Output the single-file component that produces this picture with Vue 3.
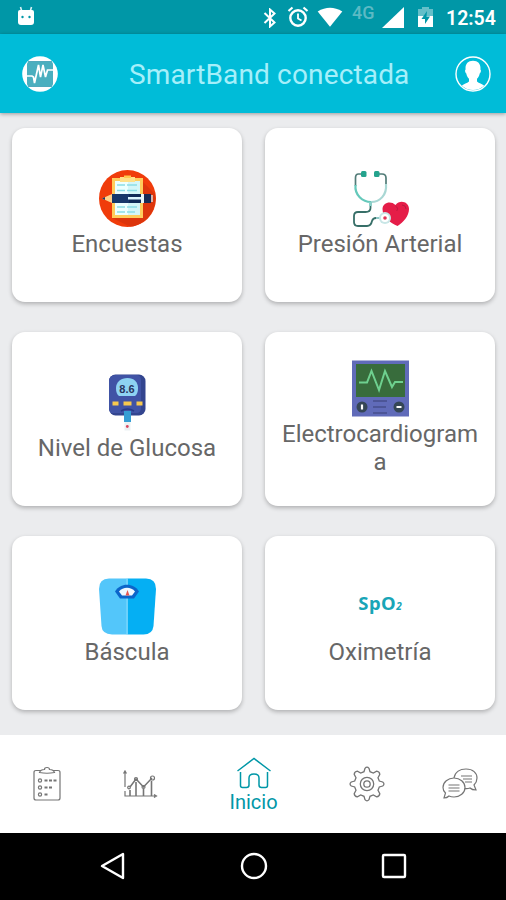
<script setup>
const cards = [
  { id: 'survey', label: 'Encuestas' },
  { id: 'pressure', label: 'Presión Arterial' },
  { id: 'glucose', label: 'Nivel de Glucosa' },
  { id: 'ecg', label: 'Electrocardiograma' },
  { id: 'scale', label: 'Báscula' },
  { id: 'spo2', label: 'Oximetría' },
]
</script>

<template>
  <div class="screen">
    <div class="status">
      <svg class="bot" width="18" height="20" viewBox="0 0 18 20">
        <path d="M5 6 3.500 1M13 6l1.500-5" stroke="#d9f1f4" stroke-width="1.600" />
        <path d="M1 6q0-2 2-2h12q2 0 2 2v10q0 3-3 3H4q-3 0-3-3Z" fill="#fff" />
        <circle cx="5.500" cy="11" r="1.200" fill="#0097a7" /><circle cx="12.500" cy="11" r="1.200" fill="#0097a7" />
      </svg>
      <div class="signals">
        <svg width="14" height="20" viewBox="0 0 14 20" fill="none" stroke="#fff" stroke-width="2">
          <path d="m1.500 5 10 9.500L7 18.500V1.500L11.500 5.500l-10 9.500" />
        </svg>
        <svg class="alarm" width="22" height="22" viewBox="0 0 22 22" fill="none" stroke="#fff">
          <circle cx="11" cy="12" r="7.700" stroke-width="2.400" />
          <path d="M11 7.500V12.500l3.500 2" stroke-width="1.800" />
          <path d="m1.500 5 4-3.500M20.500 5l-4-3.500" stroke-width="2.200" />
        </svg>
        <svg class="wifi" width="26" height="20" viewBox="0 0 26 20"><path d="M.7 4.500Q13-3 25.300 4.500L13 19.700Z" fill="#fff" /></svg>
        <span class="net">4G</span>
        <svg class="cell" width="22" height="21" viewBox="0 0 22 21"><path d="M22 0v21H0Z" fill="#fff" /></svg>
        <svg class="battery" width="15" height="20" viewBox="0 0 15 20">
          <path d="M0 2h4V0h7v2h4v8H0Z" fill="#64bfc9" /><path d="M0 9h15v11H0Z" fill="#fff" />
          <path d="M9 4 3.500 12H7v5l5-7.500H8.500Z" fill="#0097a7" />
        </svg>
        <span class="clock">12:54</span>
      </div>
    </div>

    <header class="header">
      <svg width="36" height="36" viewBox="0 0 36 36">
        <circle cx="18" cy="18" r="17.800" fill="#fff" />
        <rect x="5" y="5.500" width="26" height="25" rx="3" fill="#4aafbf" />
        <path d="M6 5.500h24M6 30.500h24" stroke="#3b9db2" stroke-width=".8" />
        <path d="M5 20h5l1.500 1 1 6 4-18 2 12 2.500-12 2.500 12 2-7h6" fill="none" stroke="#fff" stroke-width="1.700" />
      </svg>
      <h1 class="title">SmartBand conectada</h1>
      <svg width="36" height="36" viewBox="0 0 36 36">
        <circle cx="18" cy="18" r="17" fill="none" stroke="#fff" stroke-width="1.400" />
        <path d="M18 4.800c5.500 0 8 3.800 7.400 8.700 1 .5.500 3.500-.7 4-.5 2.500-1.300 4-2.700 5.200v2.800c2 2 5 2 7.200 4.200A17 17 0 0 1 6.800 29.700c2.200-2.200 5.200-2.200 7.200-4.200v-2.800c-1.400-1.200-2.200-2.700-2.700-5.200-1.200-.5-1.700-3.500-.7-4C10 8.600 12.500 4.800 18 4.800Z" fill="#fff" />
      </svg>
    </header>

    <main class="grid">
      <section v-for="card in cards" :key="card.id" class="card">
        <svg v-if="card.id === 'survey'" class="icon" viewBox="0 0 57 57">
          <circle cx="28.500" cy="28.500" r="28.500" fill="#f03c0b" />
          <path d="M43 11 56 24A28 28 0 0 1 31 56.500L13 48Z" fill="#dc350c" />
          <rect x="13" y="8" width="31" height="40" fill="#ffcc5c" />
          <path d="M16 11h13v34H16Z" fill="#edffff" /><path d="M29 11h12v34H29Z" fill="#d4f6f8" />
          <path d="M21 7h15v5H21Z" fill="#ffe08a" /><path d="M25 5.500h7V8h-7Z" fill="#ffc94f" />
          <path d="M18 15h8m2 0h10M18 20.500h8m2 0h10M18 37h8m2 0h10M18 42h8m2 0h8" stroke="#8bdde6" stroke-width="1.600" />
          <path d="m3 28.500 10-4.500v9Z" fill="#ffd28c" /><path d="m3 28.500 3-1.500v3Z" fill="#193d6b" />
          <path d="M13 24h17v9H13Z" fill="#17386b" /><path d="M30 24h12v9H30Z" fill="#102b58" />
          <path d="M29 27h13v2.500H29Z" fill="#d9f4ff" /><path d="M42 24h3v9h-3Z" fill="#e8f5fa" />
          <path d="M45 24h7v9h-7Z" fill="#172b55" /><path d="M52 25h2v7h-2Z" fill="#d9b3a9" />
        </svg>

        <svg v-else-if="card.id === 'pressure'" class="icon" viewBox="0 0 57 57" fill="none">
          <path d="M11 4H6.500Q3.500 4 3.500 8v8M25 4h5q4 0 4 4v8" stroke="#527c78" stroke-width="1.700" />
          <path d="M3.500 15c-1 10 7 17 15.500 17" stroke="#65c9bb" stroke-width="2.200" />
          <path d="M34 14c1 11-6 18-15 18" stroke="#a9d7d4" stroke-width="2.200" />
          <path d="M18.500 32v6q0 4-5 4H6q-4 0-4 4v6q0 4 4 4h9q4 0 5-5 1-3 4-3h7" stroke="#376f68" stroke-width="1.800" />
          <path d="M18.500 32v4" stroke="#8bcfc8" stroke-width="3" />
          <path d="M24 48h8" stroke="#8ec9c7" stroke-width="2" />
          <rect x="9" y="1" width="5.500" height="6" rx="1.500" fill="#24a38d" /><rect x="22" y="1" width="5.500" height="6" rx="1.500" fill="#24a38d" />
          <path d="M43.500 35c-5-5-13-2-13 4 0 8 8 14 15 17 6-4 11.500-10 11.500-17 0-7-9-10-13.500-4Z" fill="#e51d48" />
          <path d="M43.500 36c3 2 2 4 1 5M50 35q4 0 4 4" stroke="#b91a3f" stroke-width="1" />
          <circle cx="33" cy="48" r="6" fill="#c8e6e6" /><circle cx="33" cy="48" r="4" fill="#fff" /><circle cx="33" cy="48" r="1.800" fill="#df3657" />
        </svg>

        <svg v-else-if="card.id === 'glucose'" class="icon" viewBox="0 0 57 57">
          <rect x="10" y=".5" width="36.500" height="41" rx="6.500" fill="#33458f" />
          <path d="M17 1h20q5 0 5 5v28q0 5-5 5H12q-2-2-2-5V7q0-6 7-6Z" fill="#4053a5" />
          <path d="M20 22q-3-2-3-8c0-6 5-10 11.500-10S39 8 39 14q0 6-3 8Z" fill="#8ed3f2" />
          <text x="28" y="18.500" text-anchor="middle" class="digits">8.6</text>
          <path d="M13.500 27.500h6v4h-6Zm11 0h8v4h-8Zm13 0h6v4h-6Z" fill="#f7c94e" />
          <path d="M22 37q6.500-4 13 0" fill="none" stroke="#263b88" stroke-width="1.500" />
          <path d="M25 37h7v11h-7Z" fill="#359ed4" /><path d="M25.500 48h6v8.500h-6Z" fill="#eaf1f3" />
          <circle cx="28.300" cy="52.500" r="1.400" fill="#d74760" />
        </svg>

        <svg v-else-if="card.id === 'ecg'" class="icon" viewBox="0 0 57 57" fill="none">
          <path d="M0 .500h57v56H0Z" fill="#606bb9" /><path d="M4 4h49v33H4Z" fill="#386c3c" />
          <path d="M7 22.500h8L19.500 11 27 30l6-19 7 16 3-5h8" stroke="#6ed08f" stroke-width="2" />
          <circle cx="10" cy="47" r="5.500" fill="#354656" /><circle cx="47" cy="47" r="5.500" fill="#354656" />
          <path d="M10 44.500v5M44.500 47h5" stroke="#fff" stroke-width="2.200" />
          <path d="M21 41h14M21 47h13M21 53h14" stroke="#454f8c" stroke-width="1.600" />
        </svg>

        <svg v-else-if="card.id === 'scale'" class="icon" viewBox="0 0 57 57">
          <path d="M10 .500h18.500v56H13Q3 56 2.500 48L0 11Q0 .500 10 .500Z" fill="#53c6fa" />
          <path d="M28.500 .500H47q10 0 10 10.500l-2.500 37q-1 8.500-10 8.500h-16Z" fill="#05aff3" />
          <path d="M28 .500v56" stroke="#86dcff" />
          <path d="M16 13.500c5-9 19-9 24 0L35 20.500H21Z" fill="#0b65ca" />
          <path d="M20 13.500c4-5 12-5 16 0l-3 4H23Z" fill="#eff8ff" />
          <path d="m28.500 12 2 5.500h-4Z" fill="#e55551" />
        </svg>

        <div v-else class="icon spo">SpO<span class="sub">2</span></div>
        <div class="label">{{ card.label }}</div>
      </section>
    </main>

    <nav class="tabs">
      <div class="tab">
        <svg width="36" height="36" viewBox="0 0 36 36" fill="none" stroke="#757575" stroke-width="1.200">
          <path d="M12 4.500H7q-2 0-2 2V32q0 2 2 2h22q2 0 2-2V6.500q0-2-2-2h-5" />
          <path d="M10.500 6.500q1-3 5-3 0-2 2.500-2t2.500 2q4 0 5 3-7.500 1.500-15 0Z" />
          <circle cx="11" cy="14.500" r="1.600" /><circle cx="11" cy="21.500" r="1.600" /><circle cx="11" cy="28.500" r="1.600" />
          <path d="M15.500 14.500h12.500M15.500 21.500h8M15.500 28.500h3" stroke-width="2" stroke-dasharray="3 1.500" />
        </svg>
      </div>
      <div class="tab chart">
        <svg width="36" height="36" viewBox="0 0 36 36" fill="none" stroke="#757575" stroke-width="1.200">
          <path d="M3 6v15M3 25v5h30M1.500 7.500 3 5l1.500 2.500M32 28.500l2.500 1.500-2.500 1.500" />
          <path d="m8 21 6-8 7.500 8L30 12" stroke-width="1.500" />
          <circle cx="7" cy="21.500" r="1.300" /><circle cx="14" cy="13" r="1.500" /><circle cx="21.500" cy="21" r="1.500" /><circle cx="30.500" cy="12" r="2" />
          <path d="M8 24v6M14 16v14M21.500 23v7M29.500 15v15" stroke-width="1.600" />
        </svg>
      </div>
      <div class="tab home">
        <svg width="36" height="34" viewBox="0 0 36 34" fill="none" stroke="#0097a7" stroke-width="1.500">
          <path d="M1.500 15 18 2.500 34.500 15" />
          <path d="M4.500 16v13.500q0 2 2 2h4q2.500 0 2.500-2.500v-7q0-4 5-4t5 4v7q0 2.500 2.500 2.500h4q2 0 2-2V16" />
        </svg>
        <span>Inicio</span>
      </div>
      <div class="tab gear">
        <svg width="36" height="36" viewBox="0 0 36 36" fill="none" stroke="#757575" stroke-width="1.300">
          <path d="M16 2.300q2-2.500 4 0l1 3.400 3.300 1.300 3.300-1.800q3 .4 3.200 3.200L29 11.700l1.300 3.300 3.400 1q2.500 2 0 4l-3.400 1-1.300 3.300 1.800 3.300q-.2 2.800-3.200 3.200L24.300 29 21 30.300l-1 3.400q-2 2.500-4 0l-1-3.400L11.700 29l-3.300 1.800q-3-.4-3.200-3.200L7 24.300 5.700 21l-3.400-1q-2.500-2 0-4l3.400-1L7 11.700 5.200 8.400q.2-2.800 3.200-3.200L11.700 7 15 5.700Z" />
          <circle cx="18" cy="18" r="6.700" /><circle cx="18" cy="18" r="3.200" />
        </svg>
      </div>
      <div class="tab">
        <svg width="36" height="36" viewBox="0 0 36 36" fill="none" stroke="#757575" stroke-width="1.200">
          <path d="M12 12C13 6 18 3 24 3c7 0 11 4 11 9 0 3-1 5-3 7l2 5q-4 0-6-2-3 1-5 .5" />
          <path d="M12 12c6 0 11 4 11 9.500S18 31 12 31q-3 0-5-1-2 2-5 2l1.500-5Q1 25 1 21.500C1 16 6 12 12 12Z" />
          <path d="M6.500 19h11M6.500 22h11M6.500 25h11M19 10h11M21 13h9M23 16h7" />
        </svg>
      </div>
    </nav>

    <div class="system">
      <svg width="28" height="28" viewBox="0 0 28 28"><path d="M3 14 24 2v24Z" fill="none" stroke="#fff" stroke-width="2.400" stroke-linejoin="round" /></svg>
      <svg width="28" height="28" viewBox="0 0 28 28"><circle cx="14" cy="14" r="12" fill="none" stroke="#fff" stroke-width="2.400" /></svg>
      <svg width="28" height="28" viewBox="0 0 28 28"><rect x="3" y="3" width="22" height="22" rx="1" fill="none" stroke="#fff" stroke-width="2.400" /></svg>
    </div>
  </div>
</template>

<style>
body { margin: 0; }
</style>

<style scoped>
.screen {
  box-sizing: border-box;
  width: 506px;
  height: 900px;
  display: flex;
  flex-direction: column;
  overflow: hidden;
  background: #ebecee;
  font-family: Roboto, "Liberation Sans", sans-serif;
}
svg { display: block; flex: none; }
.status {
  height: 34px;
  flex: none;
  box-sizing: border-box;
  display: flex;
  justify-content: space-between;
  padding: 0 10px 0 17px;
  background: #0097a7;
  color: #fff;
}
.bot { margin-top: 6px; }
.signals { display: flex; align-items: flex-start; padding-top: 7px; }
.signals svg:first-child { margin-top: 1px; }
.alarm { margin-left: 10px; margin-top: -1px; }
.wifi { margin-left: 8px; }
.net { width: 24px; margin: -6px 0 0 9px; font-size: 18px; line-height: 24px; font-weight: 500; color: #5cbac4; }
.cell { margin-left: 6px; }
.battery { margin-left: 14px; }
.clock { width: 50px; margin-left: 13px; font-size: 19.500px; line-height: 23px; font-weight: 600; white-space: nowrap; }
.header {
  height: 79px;
  flex: none;
  box-sizing: border-box;
  display: flex;
  align-items: center;
  padding: 0 15px 0 22px;
  background: #00bcd8;
  box-shadow: 0 1px 4px rgba(0, 0, 0, .35);
}
.title { flex: 1; margin: 3px 0 0 71px; font-size: 28px; line-height: 34px; letter-spacing: .15px; font-weight: 400; color: #a5effa; white-space: nowrap; }
.grid {
  height: 622px;
  flex: none;
  box-sizing: border-box;
  display: grid;
  grid-template-columns: 230px 230px;
  grid-auto-rows: 174px;
  column-gap: 23px;
  row-gap: 30px;
  padding: 15px 11px 0 12px;
}
.card {
  box-sizing: border-box;
  display: flex;
  flex-direction: column;
  align-items: center;
  justify-content: center;
  padding-bottom: 2px;
  border-radius: 13px;
  background: #fff;
  box-shadow: 0 2px 4px rgba(0, 0, 0, .25);
}
.icon { width: 57px; height: 57px; flex: none; }
.label {
  width: 200px;
  margin-top: 3px;
  font-size: 24px;
  line-height: 28px;
  color: #676767;
  text-align: center;
  overflow-wrap: anywhere;
}
.digits { font: 700 11px "Liberation Sans", sans-serif; fill: #29365f; }
.spo {
  box-sizing: border-box;
  display: flex;
  align-items: center;
  justify-content: center;
  padding-bottom: 8px;
  font-family: "Noto Sans", "Open Sans", sans-serif;
  font-size: 18.500px;
  font-weight: 700;
  letter-spacing: .5px;
  color: #18a5b7;
}
.sub { padding-top: 6px; font-size: 10px; font-style: italic; letter-spacing: 0; }
.tabs {
  height: 98px;
  flex: none;
  box-sizing: border-box;
  display: flex;
  justify-content: space-between;
  padding: 0 28px 0 29px;
  background: #fff;
}
.tab { width: 36px; display: flex; flex-direction: column; align-items: center; justify-content: center; }
.tab.chart { margin: 0 4px 0 -4px; }
.tab.gear { margin: 0 -4px 0 4px; }
.tab.home { width: 60px; justify-content: flex-start; padding-top: 21px; color: #0097a7; font-size: 20px; line-height: 24px; }
.system { height: 67px; flex: none; box-sizing: border-box; display: flex; align-items: center; justify-content: center; gap: 112.500px; padding: 0 0 1px 1px; background: #000; }
</style>
